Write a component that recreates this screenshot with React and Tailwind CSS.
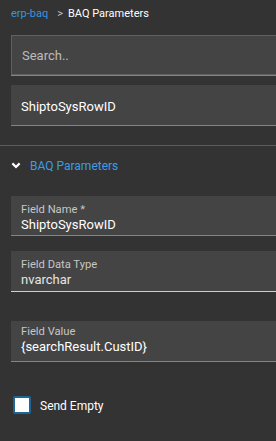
export default function App() {
  return (
    <div className="w-[276px] h-[441px] bg-[#333333] overflow-hidden text-white font-['Roboto','Noto_Sans',sans-serif]">
      {/* breadcrumb */}
      <div className="h-[35px] pl-[11px] pt-[6px] flex items-start text-[11px] leading-[16px]">
        <span className="text-[#3197df]">erp-baq</span>
        <span className="ml-[9px] text-[#c4c4c4]">&gt;</span>
        <span className="ml-[5px] text-white">BAQ Parameters</span>
      </div>

      {/* search */}
      <div className="ml-[11px] w-[300px]">
        <div className="h-[40px] bg-[#444444] border border-[#606060] pl-[10px] pt-[11px] text-[13px] leading-[17px] text-[#bcbcbc]">
          Search..
        </div>
        <div className="h-[1px] bg-[#3a9ad9]"></div>
      </div>

      {/* selected value */}
      <div className="ml-[11px] mt-[9px] w-[300px]">
        <div className="h-[40px] bg-[#444444] pl-[10px] pt-[13px] text-[13px] leading-[17px] text-white">
          ShiptoSysRowID
        </div>
        <div className="h-[1px] bg-[#3a9ad9]"></div>
      </div>

      <div className="mt-[19px] h-[1px] bg-[#5c5c5c]"></div>

      {/* section header */}
      <div className="h-[50px] pl-[11px] pt-[12px] flex items-start gap-[9px]">
        <svg className="mt-[4px] shrink-0" width="10" height="7" viewBox="0 0 10 7">
          <path d="M1.4 1.4 L5 5 L8.6 1.4" fill="none" stroke="#ffffff" strokeWidth="2.2" />
        </svg>
        <span className="text-[#3c9de2] text-[12px] leading-[16px]">BAQ Parameters</span>
      </div>

      {/* Field Name */}
      <div className="ml-[11px] w-[300px]">
        <div className="h-[39px] bg-[#444444] pl-[10px] pt-[7px]">
          <div className="text-[11.2px] leading-[14px] text-[#c6c6c6]">Field Name *</div>
          <div className="text-[13px] leading-[16px] text-white">ShiptoSysRowID</div>
        </div>
        <div className="h-[1px] bg-[#3a9ad9]"></div>
      </div>

      {/* Field Data Type */}
      <div className="ml-[11px] mt-[15px] w-[300px]">
        <div className="h-[40px] bg-[#444444] pl-[10px] pt-[7px]">
          <div className="text-[11.2px] leading-[14px] text-[#c6c6c6]">Field Data Type</div>
          <div className="text-[13px] leading-[16px] text-[#e4e4e4]">nvarchar</div>
        </div>
        <div className="h-[1px] bg-[#cfcfcf]"></div>
      </div>

      {/* Field Value */}
      <div className="ml-[11px] mt-[29px] w-[300px]">
        <div className="h-[40px] bg-[#444444] pl-[10px] pt-[4px]">
          <div className="text-[11.2px] leading-[14px] text-[#c6c6c6]">Field Value</div>
          <div className="text-[13px] leading-[16px] text-white">{'{searchResult.CustID}'}</div>
        </div>
        <div className="h-[1px] bg-[#3a9ad9]"></div>
      </div>

      {/* checkbox */}
      <div className="mt-[34px] ml-[13px] flex items-start gap-[9px]">
        <div className="w-[18px] h-[18px] bg-white border-[2px] border-[#1d6597] rounded-[2px] shrink-0"></div>
        <span className="pt-[2px] text-[12px] leading-[16px] text-white">Send Empty</span>
      </div>
    </div>
  );
}
